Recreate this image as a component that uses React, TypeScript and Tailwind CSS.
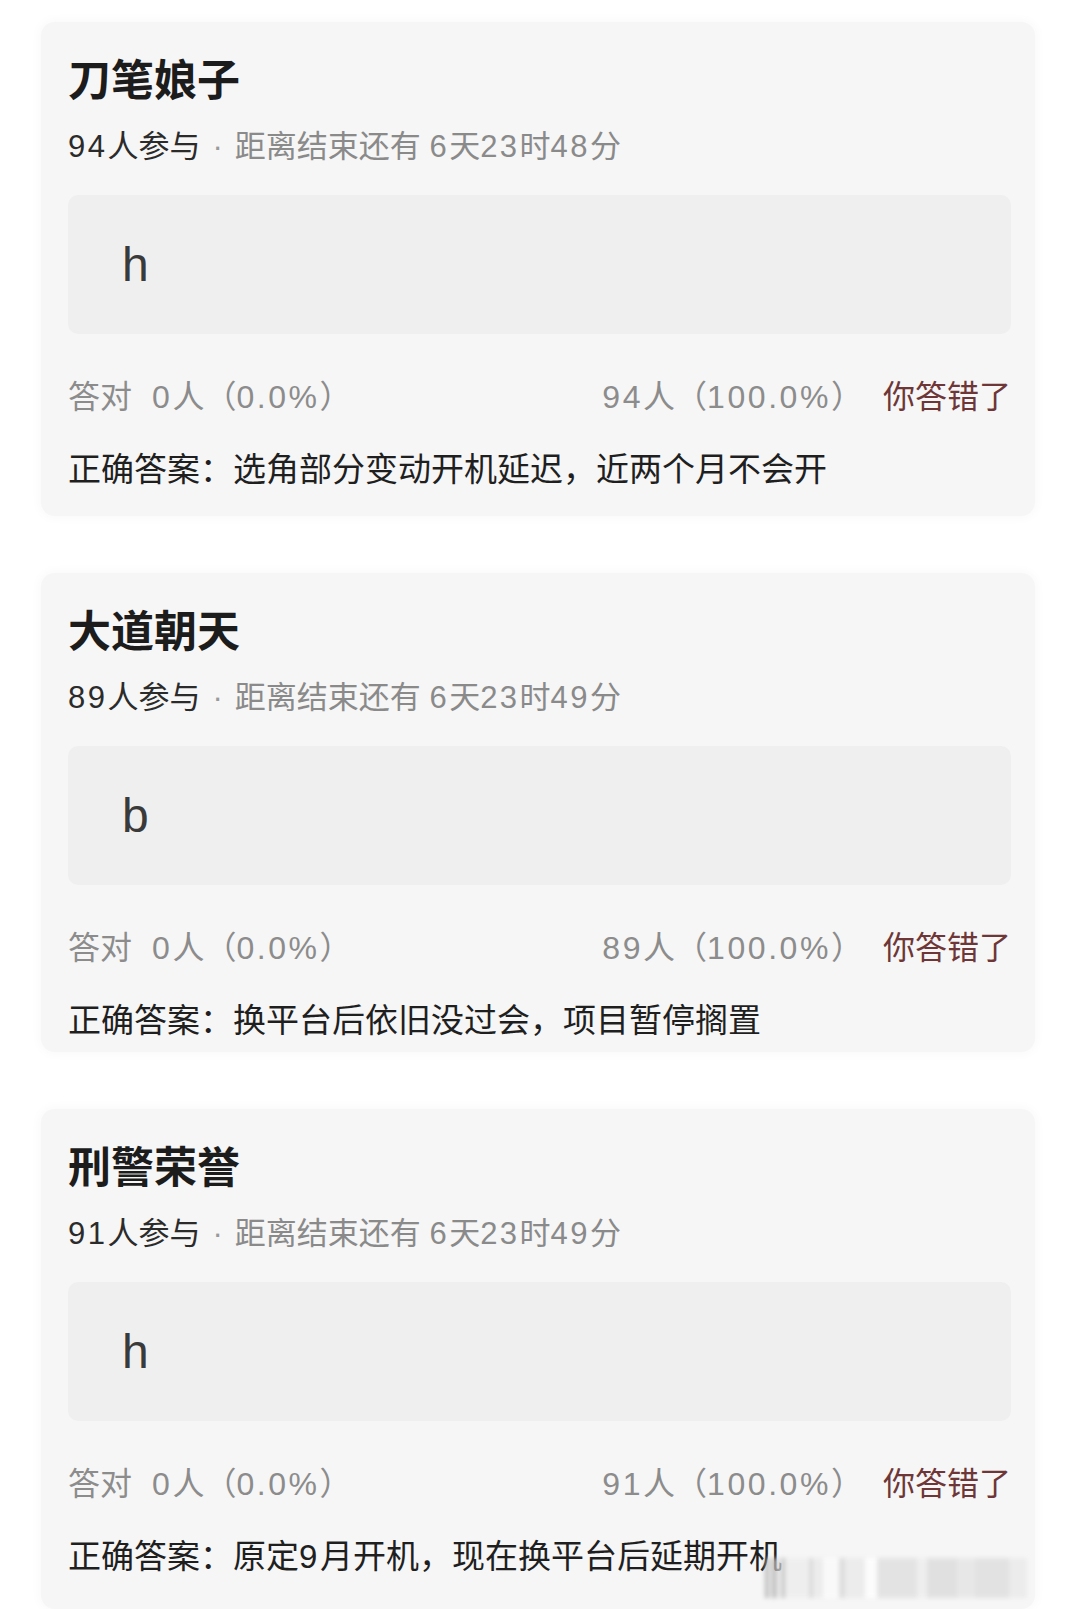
import React from 'react'

type Quiz = {
  title: string
  joined: number
  remain: string
  pick: string
  right: string
  wrong: string
  answer: string
  pb: string
}

const quizzes: Quiz[] = [
  {
    title: '刀笔娘子',
    joined: 94,
    remain: '6天23时48分',
    pick: 'h',
    right: '0人（0.0%）',
    wrong: '94人（100.0%）',
    answer: '选角部分变动开机延迟，近两个月不会开',
    pb: 'pb-[26px]',
  },
  {
    title: '大道朝天',
    joined: 89,
    remain: '6天23时49分',
    pick: 'b',
    right: '0人（0.0%）',
    wrong: '89人（100.0%）',
    answer: '换平台后依旧没过会，项目暂停搁置',
    pb: 'pb-[11px]',
  },
  {
    title: '刑警荣誉',
    joined: 91,
    remain: '6天23时49分',
    pick: 'h',
    right: '0人（0.0%）',
    wrong: '91人（100.0%）',
    answer: '原定9月开机，现在换平台后延期开机',
    pb: 'pb-[32px]',
  },
]

// blurred stamp in the lower right corner
const stampBars = [
  'w-[3px] bg-[#a0a0a0]',
  'w-[5px] bg-[#d8d8d8]',
  'w-[3px] bg-[#9c9c9c]',
  'w-[6px] bg-[#e2e2e2]',
  'w-[3px] bg-[#b0b0b0]',
  'w-[24px] bg-[#ececec]',
  'w-[4px] bg-[#d0d0d0]',
  'w-[10px] bg-[#e8e8e8]',
  'w-[16px] bg-[#fbfbfb]',
  'w-[6px] bg-[#d4d4d4]',
  'w-[20px] bg-[#e8e8e8]',
  'w-[12px] bg-[#ffffff]',
  'w-[40px] bg-[#dcdcdc]',
  'w-[10px] bg-[#ececec]',
  'w-[30px] bg-[#d8d8d8]',
  'w-[18px] bg-[#e2e2e2]',
  'w-[34px] bg-[#dadada]',
  'w-[18px] bg-[#e8e8e8]',
]

// wraps runs of digits so they get the wider spacing of the app font
const Digits = ({ text }: { text: string }) => (
  <>
    {text.split(/([0-9.%]+)/).map((part, i) =>
      /[0-9]/.test(part) ? (
        <span key={i} className="tracking-[0.08em]">
          {part}
        </span>
      ) : (
        <React.Fragment key={i}>{part}</React.Fragment>
      )
    )}
  </>
)

const QuizCard = ({ q }: { q: Quiz }) => {
  return (
    <div
      className={`rounded-[14px] bg-[#f6f6f6] shadow-[0_0_10px_3px_rgba(0,0,0,0.025)] pl-[27px] pr-[24px] pt-[34px] ${q.pb}`}
    >
      <h2 className="text-[43px] font-bold leading-[50px] text-[#1c1c1c]">{q.title}</h2>

      <p className="mt-[23px] text-[31px] leading-[36px]">
        <span className="text-[#2b2b2b]">
          <Digits text={`${q.joined}人参与`} />
        </span>
        <span className="mx-[12px] text-[#9a9a9a]">·</span>
        <span className="text-[#8a8a8a]">
          距离结束还有 <Digits text={q.remain} />
        </span>
      </p>

      <div className="mt-[30px] flex h-[139px] items-center rounded-[10px] bg-[#efefef] pl-[54px]">
        <span className="text-[48px] leading-none text-[#3a3a3a]">{q.pick}</span>
      </div>

      <div className="mt-[43px] flex items-center text-[32px] leading-[40px] text-[#8c8c8c]">
        <span>答对</span>
        <span className="ml-[20px]">
          <Digits text={q.right} />
        </span>
        <span className="ml-auto">
          <Digits text={q.wrong} />
        </span>
        <span className="ml-[20px] text-[#6e3636]">你答错了</span>
      </div>

      <p className="mt-[33px] text-[33px] leading-[40px] text-[#1f1f1f]">
        正确答案：<Digits text={q.answer} />
      </p>
    </div>
  )
}

export default function App() {
  return (
    <div className="relative h-[1609px] overflow-hidden bg-white pt-[22px] font-['Liberation_Sans','Noto_Sans_CJK_SC',sans-serif]">
      <div className="flex flex-col gap-[57px] pl-[41px] pr-[45px]">
        {quizzes.map((q) => (
          <QuizCard key={q.title} q={q} />
        ))}
      </div>

      <div className="absolute bottom-[11px] right-[10px] flex h-[40px] w-[305px] opacity-70 blur-[2px]">
        {stampBars.map((c, i) => (
          <div key={i} className={`h-full ${c}`} />
        ))}
      </div>
    </div>
  )
}
